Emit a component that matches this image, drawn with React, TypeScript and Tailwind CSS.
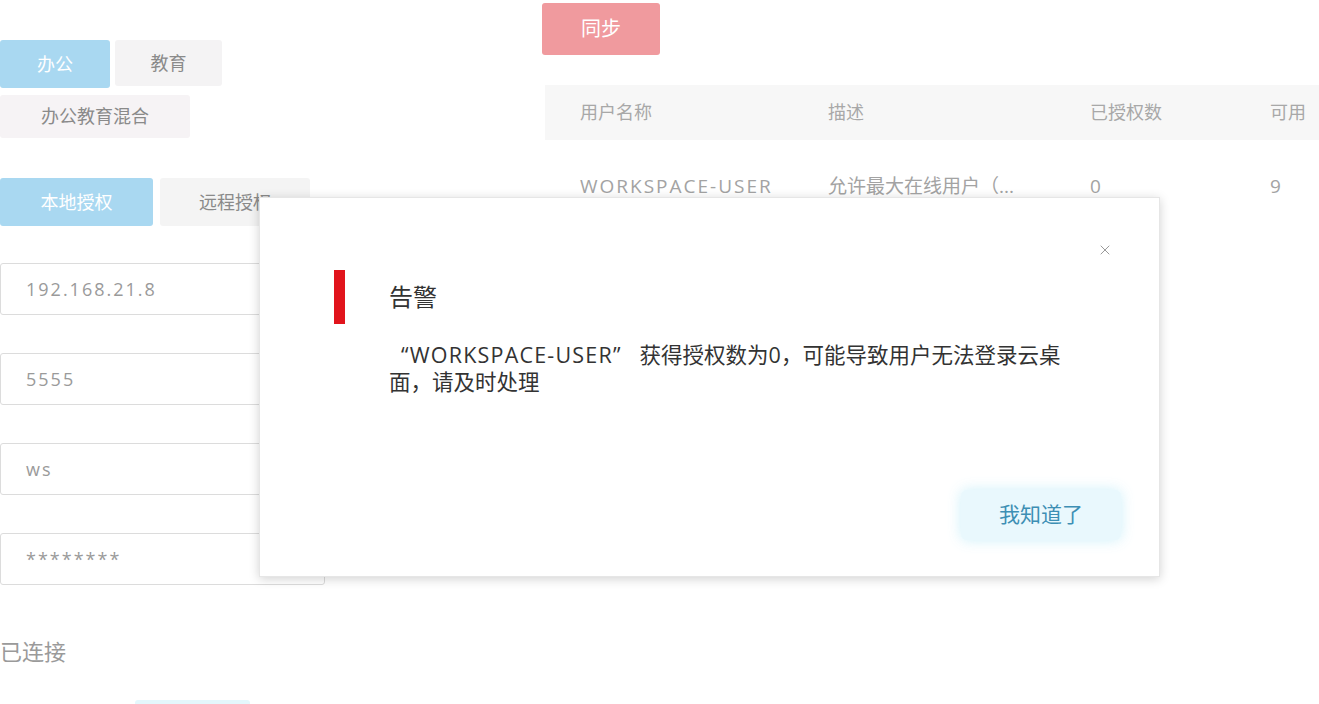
import { X } from "lucide-react";

const font = { fontFamily: '"Open Sans", "Noto Sans CJK SC", sans-serif' };

const inputs = ["192.168.21.8", "5555", "ws", "********"];

export default function App() {
  return (
    <div className="relative h-[704px] w-[1319px] overflow-hidden bg-white" style={font}>
      <div className="flex">
        {/* left config column */}
        <div className="w-[330px] shrink-0 pt-[40px]">
          <div className="flex w-[240px] flex-wrap gap-x-[5px] gap-y-[7px]">
            <div className="flex h-[48px] w-[110px] items-center justify-center rounded-[3px] bg-[#a9d8f1] text-[18px] text-white">办公</div>
            <div className="flex h-[46px] w-[107px] items-center justify-center rounded-[3px] bg-[#f4f3f4] text-[18px] text-[#8a8a8a]">教育</div>
            <div className="flex h-[43px] w-[190px] items-center justify-center rounded-[3px] bg-[#f6f3f5] text-[18px] text-[#8a8a8a]">办公教育混合</div>
          </div>

          <div className="mt-[40px] flex gap-[7px]">
            <div className="flex h-[48px] w-[153px] items-center justify-center rounded-[3px] bg-[#a9d8f1] text-[18px] text-white">本地授权</div>
            <div className="flex h-[48px] w-[150px] items-center justify-center rounded-[3px] bg-[#f4f4f4] text-[18px] text-[#8a8a8a]">远程授权</div>
          </div>

          <div className="mt-[37px] flex w-[325px] flex-col gap-[38px]">
            {inputs.map((v) => (
              <div key={v} className="flex h-[52px] items-center rounded-[3px] border border-[#dcdcdc] px-[25px] text-[18px] tracking-[2px] text-[#9a9a9a]">
                {v}
              </div>
            ))}
          </div>

          <div className="mt-[50px] text-[22px] text-[#9a9a9a]">已连接</div>
          <div className="ml-[135px] mt-[32px] h-[40px] w-[115px] rounded-[3px] bg-[#e4f7fc]" />
        </div>

        {/* right list column */}
        <div className="ml-[212px] flex-1 pt-[3px]">
          <div className="flex h-[52px] w-[118px] items-center justify-center rounded-[3px] bg-[#f09a9e] text-[20px] text-white">同步</div>
          <div className="ml-[3px] mt-[30px]">
            <div className="grid h-[55px] grid-cols-[248px_262px_180px_1fr] items-center bg-[#f7f7f7] pl-[35px] text-[18px] text-[#a8a8a8]">
              <span>用户名称</span>
              <span>描述</span>
              <span>已授权数</span>
              <span className="whitespace-nowrap">可用</span>
            </div>
            <div className="grid h-[92px] grid-cols-[248px_262px_180px_1fr] items-center pl-[35px] text-[19px] text-[#a3a3a3]">
              <span className="tracking-[2px]">WORKSPACE-USER</span>
              <span className="truncate pr-[40px]">允许最大在线用户（...</span>
              <span>0</span>
              <span>9</span>
            </div>
          </div>
        </div>
      </div>

      {/* alert dialog */}
      <div className="absolute left-[259px] top-[197px] h-[380px] w-[901px] border border-[#e6e6e6] bg-white shadow-[0_2px_10px_rgba(0,0,0,0.18)]">
        <button className="absolute right-[46px] top-[44px] text-[#9a9a9a]">
          <X size={16} strokeWidth={1.5} />
        </button>
        <div className="flex items-center pt-[72px]">
          <div className="ml-[74px] h-[54px] w-[11px] bg-[#e1141c]" />
          <div className="ml-[44px] text-[24px] text-[#333]">告警</div>
        </div>
        <p className="ml-[129px] mt-[17px] w-[690px] text-[21.5px] leading-[27px] text-[#333]">
          <span className="pl-[12px] pr-[18px] tracking-[1.2px]">“WORKSPACE-USER”</span>获得授权数为0，可能导致用户无法登录云桌面，请及时处理
        </p>
        <div className="absolute bottom-[36px] right-[38px] flex h-[50px] w-[160px] items-center justify-center rounded-[6px] bg-[#e9f8fd] text-[21px] text-[#3d8fb4] shadow-[0_0_14px_rgba(200,238,250,0.9)]">
          我知道了
        </div>
      </div>
    </div>
  );
}
